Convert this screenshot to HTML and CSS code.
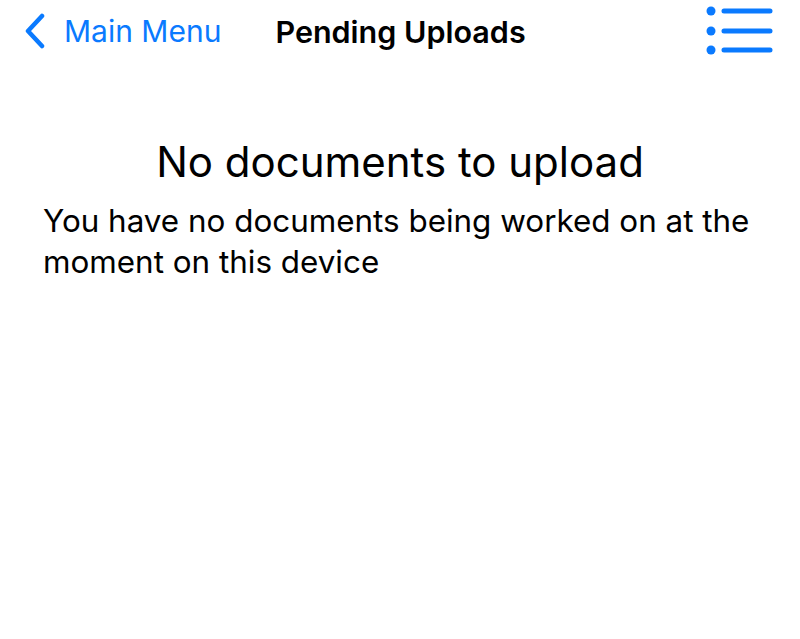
FILE: index.html
```html
<!DOCTYPE html>
<html lang="en">
<head>
    <meta charset="UTF-8">
    <meta name="viewport" content="width=device-width, initial-scale=1.0">
    <title>Pending Uploads</title>
    <link rel="stylesheet" href="styles.css">
</head>
<body>

    <!-- Barre de navigation -->
    <header class="navbar">
        <a class="back" href="#">
            <svg class="chevron" width="22" height="36" viewBox="0 0 22 36">
                <path d="M18 3 L4 18 L18 33" fill="none" stroke="#0a7aff" stroke-width="4.5" stroke-linecap="round" stroke-linejoin="round"/>
            </svg>
            <span>Main Menu</span>
        </a>
        <h1 class="title">Pending Uploads</h1>
        <button class="menu" type="button" aria-label="Menu">
            <svg width="68" height="50" viewBox="0 0 68 50">
                <circle cx="5" cy="5" r="4.5" fill="#0a7aff"/>
                <circle cx="5" cy="25" r="4.5" fill="#0a7aff"/>
                <circle cx="5" cy="44" r="4.5" fill="#0a7aff"/>
                <path d="M18 5 H64 M18 25 H64 M18 44 H64" stroke="#0a7aff" stroke-width="5" stroke-linecap="round"/>
            </svg>
        </button>
    </header>

    <!-- Contenu vide -->
    <main class="empty">
        <h2>No documents to upload</h2>
        <p>You have no documents being worked on at the moment on this device</p>
    </main>

</body>
</html>
```

FILE: styles.css
```css
body {
    margin: 0;
    font-family: Inter, "Noto Sans", sans-serif;
    background-color: #fff;
    color: #000;
}
.navbar {
    display: flex;
    align-items: center;
    height: 62px;
    padding: 0 26px 0 24px;
}
.back {
    display: flex;
    align-items: center;
    gap: 18px;
    color: #0a7aff;
    text-decoration: none;
    font-size: 30px;
}
.title {
    margin: 0 0 0 54px;
    font-size: 30.5px;
    font-weight: 600;
}
.menu {
    margin-left: auto;
    background: none;
    border: none;
    padding: 0;
    display: flex;
}
.empty {
    padding: 74px 43px 0 43px;
}
.empty h2 {
    margin: 0 0 14px 0;
    text-align: center;
    font-size: 42px;
    font-weight: 400;
}
.empty p {
    margin: 0;
    font-size: 31.4px;
    line-height: 41px;
}
```
